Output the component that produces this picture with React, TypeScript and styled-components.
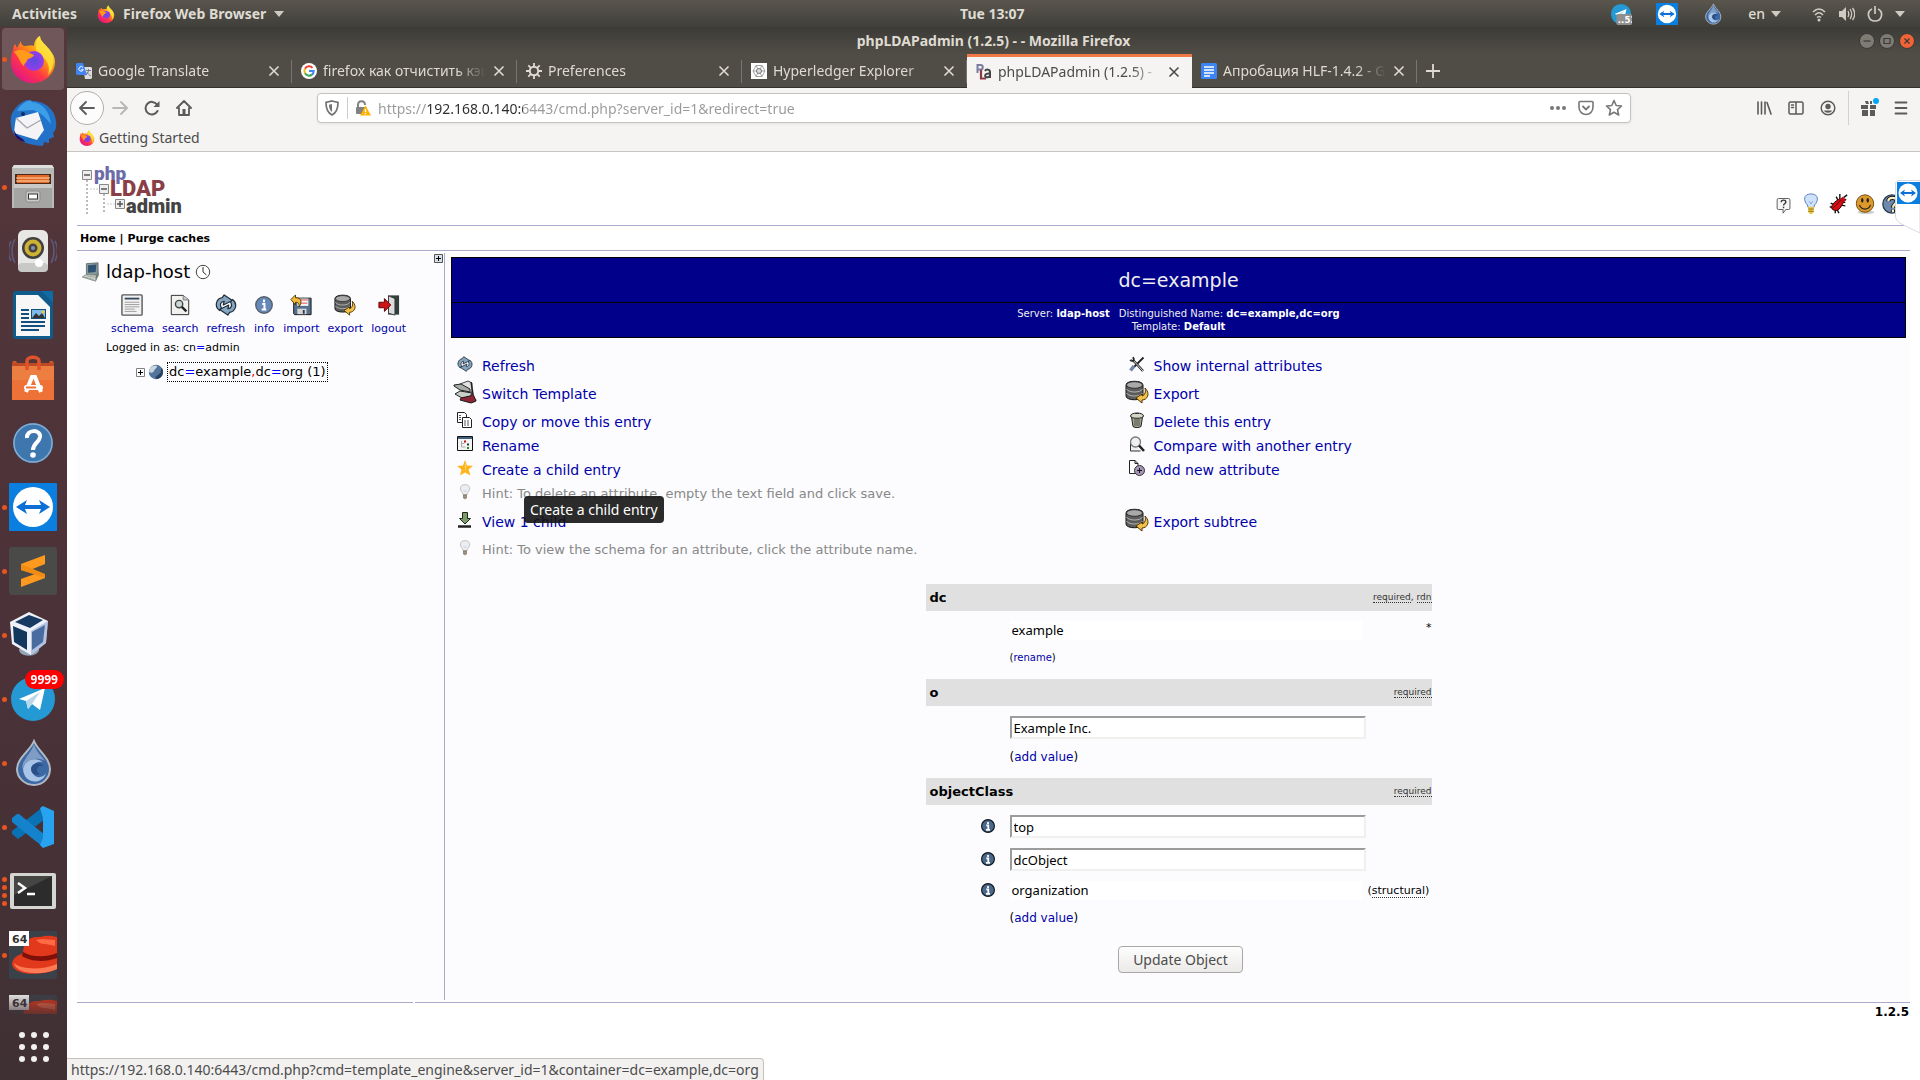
import React from "react";
import styled, { createGlobalStyle, css } from "styled-components";

const UI = `"Noto Sans", "Open Sans", sans-serif`;
const WEB = `"DejaVu Sans", Verdana, sans-serif`;

const Global = createGlobalStyle`
  *, *::before, *::after { box-sizing: border-box; }
  body { margin: 0; font-family: ${UI}; font-size: 14px; background: #fff; }
  button { font: inherit; color: inherit; border: 0; padding: 0; background: none; }
  a { color: #0000aa; text-decoration: none; }
  svg { display: block; flex: none; }
`;

/* ---------- shell ---------- */

const Desktop = styled.div`
  height: 100vh;
  display: flex;
  flex-direction: column;
  overflow: hidden;
`;

const TopBar = styled.header`
  flex: none;
  height: 27px;
  display: grid;
  grid-template-columns: 50% auto 1fr;
  align-items: center;
  background: linear-gradient(#5a564e, #403f3a);
  color: #dfdbd2;
  font-weight: 700;
  line-height: 20px;
`;

const TopGroup = styled.div<{ $end?: boolean }>`
  display: flex;
  align-items: center;
  gap: ${(p) => (p.$end ? "30px" : "20px")};
  padding: 0 ${(p) => (p.$end ? 15 : 12)}px;
  justify-content: ${(p) => (p.$end ? "flex-end" : "flex-start")};
`;

const TopButton = styled.button<{ $gap?: number }>`
  display: flex;
  align-items: center;
  gap: ${(p) => p.$gap ?? 8}px;
  font-weight: ${(p) => (p.$gap ? 500 : 700)};
`;

const TrayIcons = styled.div`
  display: flex;
  align-items: center;
  gap: 24px;
  margin-right: -6px;
`;

const Body = styled.div`
  flex: 1;
  min-height: 0;
  display: flex;
`;

const Dock = styled.nav`
  flex: none;
  width: 67px;
  display: flex;
  flex-direction: column;
  background: linear-gradient(#54373b, #4b3238 60%, #3f3034);
`;

const DockList = styled.div`
  flex: 1;
  min-height: 0;
  display: flex;
  flex-direction: column;
  gap: 2px;
  padding: 1px 3px 0 2px;
  overflow: hidden;
  mask-image: linear-gradient(#000 calc(100% - 24px), rgba(0, 0, 0, 0.25));
`;

const DockItem = styled.button<{ $active?: boolean }>`
  position: relative;
  flex: none;
  height: 62px;
  display: flex;
  align-items: center;
  gap: 2px;
  border-radius: 4px;
  background: ${(p) => (p.$active ? "#705759" : "transparent")};
`;

const Dots = styled.span`
  width: 5px;
  display: flex;
  flex-direction: column;
  gap: 3px;
  i {
    height: 5px;
    border-radius: 50%;
    background: #e95420;
  }
`;

const Badge = styled.span`
  position: absolute;
  top: 2px;
  right: 0;
  padding: 0 6px;
  border-radius: 10px;
  background: #ff0000;
  color: #fff;
  font: 700 12px/19px ${UI};
`;

const AppsButton = styled.button`
  height: 66px;
  display: flex;
  align-items: center;
  justify-content: center;
`;

const Browser = styled.div`
  position: relative;
  flex: 1;
  min-width: 0;
  display: flex;
  flex-direction: column;
  background: #fff;
`;

const TitleBar = styled.div`
  flex: none;
  height: 27px;
  display: grid;
  grid-template-columns: 1fr auto 1fr;
  align-items: center;
  background: linear-gradient(#3c3b37, #504d46);
  color: #dfdbd2;
  font-weight: 700;
`;

const WindowButtons = styled.div`
  grid-column: 3;
  justify-self: end;
  display: flex;
  gap: 4px;
  padding-right: 5px;
`;

const WindowTitle = styled.span`
  grid-column: 2;
`;

const TabStrip = styled.div`
  flex: none;
  height: 34px;
  display: flex;
  background: #504d46;
  border-bottom: 1px solid #33322e;
`;

const TabBox = styled.div<{ $active?: boolean }>`
  position: relative;
  flex: 0 1 225px;
  min-width: 0;
  display: flex;
  align-items: center;
  gap: 6px;
  padding: 1px 11px 0 9px;
  color: #dfdbd2;
  ${(p) =>
    p.$active
      ? css`
          margin-bottom: -1px;
          background: #f5f4f2;
          color: #4c4c4c;
          border-top: 3px solid #f07746;
          padding-bottom: 3px;
        `
      : css`
          &::after {
            content: "";
            align-self: stretch;
            margin: 5px -11px 4px 4px;
            border-right: 1px solid #78756e;
          }
        `}
`;

const TabTitle = styled.span`
  flex: 1;
  min-width: 0;
  overflow: hidden;
  white-space: nowrap;
  line-height: 20px;
  mask-image: linear-gradient(to right, #000 calc(100% - 30px), transparent);
`;

const NewTab = styled.button`
  width: 32px;
  display: flex;
  align-items: center;
  justify-content: center;
`;

const NavBar = styled.div`
  flex: none;
  height: 40px;
  display: flex;
  align-items: center;
  background: #f5f4f2;
  color: #5b5b5b;
`;

const NavButtons = styled.div<{ $end?: boolean }>`
  display: flex;
  align-items: center;
  gap: 12px;
  ${(p) => (p.$end ? "padding-right: 9px;" : "padding-left: 3px;")}
`;

const NavButton = styled.button<{ $round?: boolean }>`
  display: flex;
  align-items: center;
  justify-content: center;
  width: ${(p) => (p.$round ? 34 : 20)}px;
  height: ${(p) => (p.$round ? 34 : 20)}px;
  ${(p) =>
    p.$round &&
    css`
      margin-right: -6px;
      border: 1px solid #b0aeac;
      border-radius: 50%;
      background: #fcfcfc;
    `}
`;

const NavDivider = styled.i`
  width: 1px;
  height: 34px;
  margin: 0 -2px;
  background: #d3d1cf;
`;

const NavSpacer = styled.div`
  flex: 0 1 123px;
`;

const UrlBar = styled.div`
  flex: 1;
  height: 30px;
  display: flex;
  align-items: center;
  gap: 7px;
  padding: 0 6px;
  border: 1px solid #c4c2c0;
  border-radius: 4px;
  background: #fff;
  box-shadow: 0 1px 3px rgba(0, 0, 0, 0.08);
  color: #828282;
`;

const UrlDivider = styled.i`
  width: 1px;
  height: 22px;
  background: #cfcdcb;
`;

const UrlInput = styled.input`
  flex: 1;
  min-width: 0;
  height: 24px;
  border: 0;
  padding: 0;
  outline: 0;
  font: 14px/20px ${UI};
  color: transparent;
  background: linear-gradient(to right, #999 48px, #2c2c2c 48px, #2c2c2c 145px, #999 145px);
  background-clip: text;
  -webkit-background-clip: text;
`;

const UrlActions = styled.div`
  display: flex;
  gap: 10px;
  padding-right: 1px;
`;

const Bookmarks = styled.div`
  flex: none;
  height: 24px;
  padding: 0 12px 3px;
  display: flex;
  background: #f5f4f2;
  border-bottom: 1px solid #c6c4c2;
  a {
    display: flex;
    align-items: center;
    gap: 4px;
    color: #4c4c4c;
    line-height: 20px;
  }
`;

const StatusTip = styled.output`
  position: absolute;
  left: 0;
  bottom: 0;
  height: 22px;
  padding: 0 4px;
  border: 1px solid #c4bfbb;
  border-width: 1px 1px 0 0;
  border-radius: 0 4px 0 0;
  background: #f2f1f0;
  color: #4c4c4c;
  font-size: 14px;
  line-height: 22px;
  white-space: nowrap;
`;

/* ---------- phpLDAPadmin page ---------- */

const Page = styled.div`
  flex: 1;
  min-height: 0;
  padding: 0 10px;
  font: 13px/16px ${WEB};
  color: #000;
`;

const PageHeader = styled.div`
  height: 74px;
  display: flex;
  align-items: flex-end;
  justify-content: space-between;
  padding: 0 7px 10px 5px;
  border-bottom: 1px solid #aaaacc;
`;

const HeaderIcons = styled.div`
  display: flex;
  align-items: center;
  gap: 5px;
`;

const PageNav = styled.nav`
  height: 25px;
  padding: 0 3px;
  border-bottom: 1px solid #aaaacc;
  font: 700 11px/26px ${WEB};
  a { color: #000; }
`;

const Columns = styled.div`
  display: grid;
  grid-template-columns: 368px 1fr;
  margin-top: 2px;
  background: #fcfcfe;
`;

const Tree = styled.aside`
  padding: 1px 1px 0 4px;
  border-right: 1px solid #aaaacc;
`;

const TreeHead = styled.div`
  display: flex;
  align-items: flex-start;
  height: 40px;
`;

const ServerName = styled.h2`
  flex: 1;
  display: flex;
  align-items: center;
  gap: 5px;
  margin: 0;
  font: 400 18px/36px ${WEB};
`;

const ServerTools = styled.div`
  display: flex;
  gap: 8px;
  padding-left: 30px;
  a {
    display: flex;
    flex-direction: column;
    align-items: center;
    gap: 6px;
    font-size: 11px;
    line-height: 14px;
  }
`;

const Eq = styled.b`
  font-weight: 400;
  color: #0000ff;
`;

const Comma = styled.b`
  font-weight: 400;
  color: #ff0000;
`;

const Login = styled.p`
  margin: 0;
  padding: 4px 0 6px 25px;
  font-size: 11px;
`;

const TreeNode = styled.div`
  display: flex;
  align-items: center;
  gap: 3px;
  padding-left: 55px;
  a {
    color: #000;
    padding: 1px;
    border: 1px dotted #000;
  }
`;

const Main = styled.main`
  padding: 4px 4px 27px 6px;
`;

const EntryHead = styled.header`
  border: 1px solid #000;
  background: #00008b;
  color: #eeeeee;
  text-align: center;
  h1 {
    margin: 0;
    border-bottom: 1px solid #000;
    font: 400 19px/44px ${WEB};
  }
  p {
    margin: 0;
    padding: 4px;
    font-size: 10px;
    line-height: 13px;
  }
  b { color: #fff; }
  b + span { margin-left: 9px; }
`;

const Menus = styled.div`
  position: relative;
  display: grid;
  grid-template-columns: 6fr 7fr;
  padding-top: 16px;
`;

const MenuList = styled.ul`
  margin: 0;
  padding: 0;
  list-style: none;
`;

const MenuRow = styled.li<{ $tall?: boolean }>`
  height: ${(p) => (p.$tall ? 32 : 24)}px;
  display: grid;
  grid-template-columns: 28px 1fr;
  column-gap: 3px;
  align-items: center;
  font-size: 14px;
  & > svg {
    justify-self: center;
    margin-bottom: 4px;
  }
`;

const Hint = styled.small`
  color: #888;
  font-size: 13px;
  line-height: 18px;
`;

const Tooltip = styled.div`
  position: absolute;
  left: 73px;
  top: 158px;
  padding: 0 6px;
  border-radius: 4px;
  background: rgba(20, 20, 20, 0.9);
  color: #fff;
  font: 14px/27px ${UI};
`;

const Form = styled.form`
  width: 506px;
  margin: 22px auto 0;
  display: flex;
  flex-direction: column;
`;

const AttrHead = styled.h3`
  height: 28px;
  margin: 0;
  padding: 0 0 0 4px;
  display: flex;
  align-items: center;
  justify-content: space-between;
  background: #e0e0e0;
  background-clip: padding-box;
  border-bottom: 1px solid transparent;
  font: 700 13px/24px ${WEB};
`;

const Notes = styled.span`
  font: 400 9px/12px ${WEB};
  color: #333;
  margin-bottom: 2px;
`;

const Abbr = styled.abbr`
  text-decoration: none;
  border-bottom: 1px dotted #333;
`;

const Values = styled.div`
  display: flex;
  flex-direction: column;
  gap: 10px;
  padding: 9px 0 13px;
`;

const ValueRow = styled.div`
  display: grid;
  grid-template-columns: 84px 356px 1fr;
  align-items: center;
  & > svg {
    justify-self: center;
    margin: 0 0 2px 40px;
  }
`;

const TextBox = styled.input<{ $plain?: boolean }>`
  grid-column: 2;
  width: ${(p) => (p.$plain ? 352 : 356)}px;
  height: ${(p) => (p.$plain ? 19 : 23)}px;
  padding: 0 2px;
  border: ${(p) => (p.$plain ? "0" : "2px solid")};
  border-color: #9c9c9c #f0f0ee #f0f0ee #9c9c9c;
  background: #fff;
  color: #000;
  font: 13px/19px ${UI};
`;

const Side = styled.span<{ $end?: boolean }>`
  font-size: 11px;
  line-height: 14px;
  padding-left: 2px;
  text-align: ${(p) => (p.$end ? "right" : "left")};
  align-self: ${(p) => (p.$end ? "start" : "center")};
`;

const ValueLink = styled.div<{ $small?: boolean }>`
  padding-left: 84px;
  font-size: ${(p) => (p.$small ? 10 : 12)}px;
  line-height: 16px;
`;

const Submit = styled.button`
  align-self: center;
  margin: 7px 0 0 4px;
  height: 27px;
  padding: 0 14px;
  border: 1px solid #aaa8a5;
  border-radius: 4px;
  background: linear-gradient(#fdfdfd, #ebeae8);
  color: #4c4c4c;
  font: 14px/24px ${UI};
`;

const BottomRule = styled.div`
  display: grid;
  grid-template-columns: 336px 1fr;
  gap: 2px;
  margin-top: 2px;
  i {
    height: 1px;
    background: #aaaacc;
  }
`;

const Version = styled.footer`
  padding: 0 1px;
  text-align: right;
  font: 700 12px/18px ${WEB};
`;

const RemotePanel = styled.aside`
  position: absolute;
  right: 0;
  top: 153px;
`;

/* ---------- drawings ---------- */

const Icon = ({ s = 24, vb = "0 0 24 24", children }: { s?: number; vb?: string; children: React.ReactNode }) => (
  <svg width={s} height={s} viewBox={vb} fill="none" aria-hidden="true">
    {children}
  </svg>
);

const Caret = () => (
  <svg width="10" height="6" viewBox="0 0 10 6" aria-hidden="true">
    <path d="M0 0h10L5 6z" fill="#cfcbc2" />
  </svg>
);

const Firefox = ({ s = 48 }: { s?: number }) => (
  <Icon s={s} vb="0 0 48 48">
    <defs>
      <linearGradient id={`ffa${s}`} x1=".85" y1=".1" x2=".2" y2=".95">
        <stop offset="0" stopColor="#fff44f" />
        <stop offset=".35" stopColor="#ff980e" />
        <stop offset=".65" stopColor="#ff3647" />
        <stop offset="1" stopColor="#e31587" />
      </linearGradient>
      <radialGradient id={`ffb${s}`}>
        <stop offset="0" stopColor="#5b4be0" />
        <stop offset="1" stopColor="#9a3be8" />
      </radialGradient>
    </defs>
    <path d="M4 15c0-2 1-5 2-6l2 4 4-7c0 3 1 4 3 5 3 0 8-1 10 0 0-4 2-8 6-10 0 5 5 8 9 13 3 4 6 7 6 13 0 12-10 21-22 21S2 39 2 27c0-5 1-9 2-12z" fill={`url(#ffa${s})`} />
    <path d="M27 11c0-4 1-8 4-10 0 5 5 8 9 13 7 8 5 20-1 26 3-10-2-16-7-19-5-3-5-6-5-10z" fill="#ffe23b" opacity=".85" />
    <circle cx="25" cy="26" r="10" fill={`url(#ffb${s})`} />
    <path d="M5 17c5-3 10-3 13 0 3 1 5 2 7 3-1 3-5 3-7 5 0 3-3 3-3 6-4-2-4-8-10-14z" fill="#ff9a1a" />
  </Icon>
);

const Thunderbird = () => (
  <Icon s={48} vb="0 0 48 48">
    <path d="M2 26C0 12 10 4 18 1l4 1c12-1 25 8 25 21 1 6-1 9-3 11l1 4-5 2v4l-5-1-1 4C20 46 3 42 2 26z" fill="#2372c9" />
    <path d="M8 12C13 2 25-1 22 3c14 1 19 12 20 22-5-5-8-11-18-14z" fill="#3d9ee8" />
    <path d="M7 19l22-6 6 18-7 10-23-7 1-9z" fill="#f4f4f6" />
    <path d="M7 19l11 10 14-8" stroke="#a5a5ae" strokeWidth="1.4" />
    <path d="M5 31c3 8 8 6 11 12C8 41 5 37 5 31z" fill="#22116b" />
    <circle cx="14" cy="15" r="2" fill="#102b5e" />
  </Icon>
);

const Files = () => (
  <Icon s={48} vb="0 0 48 48">
    <path d="M3 5l2-3h38l2 3v40H3z" fill="#b9b9b7" />
    <path d="M3 5l2-3h38l2 3z" fill="#dededc" />
    <path d="M6 11h36v12H6z" fill="#4b2a19" />
    <path d="M8 12h32v8H8z" fill="#e2692a" />
    <path d="M7 15h34M7 18h34" stroke="#ffd9a8" />
    <path d="M5 21h38v24H5z" fill="#a5a5a3" />
    <path d="M5 21h38v4H5z" fill="#c9c9c7" />
    <rect x="17" y="28" width="14" height="11" rx="2" fill="#c9c9c7" stroke="#8c8c8a" />
    <rect x="19.500" y="31" width="9" height="5" fill="#fff" stroke="#333" />
  </Icon>
);

const Rhythmbox = () => (
  <Icon s={48} vb="0 0 48 48">
    <path d="M6 12c-4 7-4 17 0 24M42 12c4 7 4 17 0 24M2 14c-3 6-3 14 0 20M46 14c3 6 3 14 0 20" stroke="#5d5a7d" strokeWidth="1.500" />
    <rect x="9" y="3" width="30" height="42" rx="6" fill="#e7e7e5" />
    <rect x="9" y="36" width="30" height="9" rx="4" fill="#c8c8c6" />
    <circle cx="24" cy="21" r="11" fill="#3f3f3f" />
    <circle cx="24" cy="21" r="8.500" fill="#cfb233" />
    <circle cx="24" cy="21" r="4.500" fill="#444" />
    <circle cx="24" cy="21" r="2" fill="#8292ad" />
    <circle cx="30" cy="36" r="4" fill="#fff" />
  </Icon>
);

const Writer = () => (
  <Icon s={48} vb="0 0 48 48">
    <path d="M7 0h25l12 12v33c0 2-1 3-3 3H7c-2 0-3-1-3-3V3c0-2 1-3 3-3z" fill="#0f5b8b" />
    <path d="M32 0h12v12z" fill="#0d6ba6" />
    <path d="M7 4h22l12 12v29H7z" fill="#f7f7f7" />
    <path d="M12 19h8M12 23h8M12 27h8M12 31h24M12 35h24M12 39h18" stroke="#14507d" strokeWidth="1.8" />
    <rect x="22.500" y="18.500" width="14" height="9" fill="#7ebbe8" stroke="#14507d" />
    <path d="M23 27l4-5 3 3 3-3 3 5z" fill="#333" />
    <circle cx="34" cy="21" r="1.500" fill="#ffc33b" />
  </Icon>
);

const Store = () => (
  <Icon s={48} vb="0 0 48 48">
    <path d="M4 6h3l2 4H3zM44 6h-3l-2 4h6z" fill="#d0562c" />
    <path d="M3 8h42v9H3z" fill="#bd4a22" />
    <path d="M3 11h42v34H3z" fill="#ee7137" />
    <path d="M3 11h42v14H3z" fill="#e98b4c" opacity=".5" />
    <path d="M18 15V6c0-5 12-5 12 0v9" stroke="#e0522b" strokeWidth="3.500" />
    <path d="M17 37l6-15h3l6 15" stroke="#fff" strokeWidth="4" />
    <rect x="15" y="30" width="19" height="5" rx="2.500" fill="#fff" />
    <path d="M17 32.500h10" stroke="#ee7137" strokeWidth="2" />
  </Icon>
);

const HelpApp = () => (
  <Icon s={48} vb="0 0 48 48">
    <circle cx="24" cy="24" r="20" fill="#3d77ae" />
    <circle cx="24" cy="24" r="19" stroke="#86abd0" strokeWidth="1.500" />
    <path d="M18 19c-1-9 14-9 13-1-1 6-7 6-7 13" stroke="#fff" strokeWidth="4" />
    <circle cx="24" cy="36" r="2.800" fill="#fff" />
  </Icon>
);

const TeamViewer = ({ s = 48 }: { s?: number }) => (
  <Icon s={s} vb="0 0 48 48">
    <rect width="48" height="48" fill="#0b7fe0" rx="1" />
    <circle cx="24" cy="24" r="20" fill="#fff" />
    <path d="M7 24l11-7-2 5h16l-2-5 11 7-11 7 2-5H16l2 5z" fill="#0b6fd6" />
  </Icon>
);

const Sublime = () => (
  <Icon s={48} vb="0 0 48 48">
    <rect width="48" height="48" rx="3" fill="#4a4a48" />
    <path d="M12 17L36 8v9l-15 6 15 5v3L12 40v-8l14-5-14-4z" fill="#ff9a1f" />
    <path d="M12 17l24 10v4L12 23z" fill="#f08c14" />
  </Icon>
);

const VBox = () => (
  <Icon s={48} vb="0 0 48 48">
    <path d="M10 38c0 10 22 8 20-1l-8-3z" fill="#93a5b8" />
    <path d="M20 1L1 11l2 22 19 11 15-12 2-22z" fill="#eef2f8" />
    <path d="M20 4L6 11l15 6 13-8z" fill="#173a63" />
    <path d="M4 15l14 6v18L5 31z" fill="#14375d" />
    <path d="M23 21l13-7-2 17-11 8z" fill="#1b4370" />
    <path d="M39 10l-2 22-15 12V20z" fill="#7894ce" opacity=".5" />
  </Icon>
);

const Telegram = ({ s = 48, count }: { s?: number; count?: boolean }) => (
  <Icon s={s} vb="0 0 48 48">
    <circle cx="24" cy="24" r="22" fill="#2499d3" />
    <path d="M10 24l26-11-5 22-8-6-4 5-2-8z" fill="#fff" />
    <path d="M17 26l14-9-8 12-4 5z" fill="#b8d8ea" />
    {count && (
      <>
        <rect x="14" y="24" width="34" height="24" rx="4" fill="#8f8f8f" />
        <text x="17" y="43" fontSize="19" fontFamily="DejaVu Sans" fill="#fff">..52</text>
      </>
    )}
  </Icon>
);

const Drop = ({ s = 48 }: { s?: number }) => (
  <Icon s={s} vb="0 0 48 48">
    <path d="M25 2c4 10 16 17 16 28 0 9-7 16-16 16S8 39 8 30C8 19 21 12 25 2z" fill="#3c69a3" stroke="#b3b9c3" strokeWidth="2" />
    <path d="M25 5c2 8 8 12 11 17-8-5-20-1-22 8-3-7 8-15 11-25z" fill="#7f9cc4" />
    <path d="M14 30c2-9 12-13 20-7-9-2-14 7-9 13 4 4 10 2 12-2-3 12-22 12-23-4z" fill="#a9c4e6" />
    <path d="M22 30c0-6 8-8 13-3-8-2-9 6-4 8-4 2-9 0-9-5z" fill="#2a4f87" />
  </Icon>
);

const VSCode = () => (
  <Icon s={48} vb="0 0 48 48">
    <path d="M34 4l1 13L9 36l-6-5v-3z" fill="#0b71b5" />
    <path d="M3 19v-4l5-4h2l26 21-2 12z" fill="#1583cc" />
    <path d="M34 3l11 5v33l-11 4-3-3 3-7V15l-3-10z" fill="#28a3f0" />
  </Icon>
);

const Terminal = () => (
  <Icon s={48} vb="0 0 48 48">
    <rect x="1" y="6" width="46" height="36" rx="2" fill="#d5d5d1" />
    <rect x="5" y="9" width="38" height="30" fill="#2b2c2b" />
    <path d="M5 9h38L5 28z" fill="#454644" />
    <path d="M9 16l7 5-7 5M18 27h8" stroke="#fff" strokeWidth="2.500" />
  </Icon>
);

const RedHat = () => (
  <Icon s={48} vb="0 0 48 48">
    <rect width="48" height="48" rx="2" fill="#3b4149" />
    <path d="M3 33c1-8 8-9 11-11 0-8 5-17 14-16 6 0 8-3 20 0v32C30 46 4 44 3 33z" fill="#e2381c" />
    <path d="M5 32c6 6 26 8 43 1v5C30 46 6 42 5 32z" fill="#ff7a55" />
    <path d="M14 21c8 5 22 6 34 1v5c-13 5-28 3-35-2z" fill="#7d1008" />
    <path d="M27 9c7-2 14 0 19 0v6c-8-3-14 0-19-6z" fill="#ff6a45" />
    <rect width="20" height="15" fill="#fff" />
    <text x="3" y="12" fontSize="11" fontWeight="700" fontFamily="DejaVu Sans" fill="#333">64</text>
  </Icon>
);

const AppsGrid = () => (
  <Icon s={32} vb="0 0 32 32">
    {[4, 16, 28].map((y) => [4, 16, 28].map((x) => <circle key={`${x}-${y}`} cx={x} cy={y} r="3" fill="#f2f1f0" />))}
  </Icon>
);

const Wifi = () => (
  <Icon s={16} vb="0 0 16 16">
    <path d="M2 6c4-4 8-4 12 0M4 9c3-3 5-3 8 0M6 11.500c1-1 3-1 4 0" stroke="#cfcbc2" strokeWidth="1.600" />
    <circle cx="8" cy="14" r="1.500" fill="#cfcbc2" />
  </Icon>
);
const Volume = () => (
  <Icon s={16} vb="0 0 16 16">
    <path d="M0 5h3l4-4v14l-4-4H0z" fill="#cfcbc2" />
    <path d="M9 5c1 2 1 4 0 6M11 3c2 3 2 7 0 10M13.500 2c3 4 3 8 0 12" stroke="#cfcbc2" strokeWidth="1.300" />
  </Icon>
);
const Power = () => (
  <Icon s={16} vb="0 0 16 16">
    <path d="M5 3C-1 6 1 15 8 15s9-9 3-12M8 0v8" stroke="#cfcbc2" strokeWidth="1.700" />
  </Icon>
);

const WinButton = ({ kind }: { kind: "min" | "max" | "close" }) => (
  <Icon s={16} vb="0 0 16 16">
    <circle cx="8" cy="8" r="7.500" fill={kind === "close" ? "#ef6337" : "#7d7b74"} stroke="#3a3935" />
    <path d={kind === "min" ? "M4.500 8h7" : kind === "max" ? "M5 5.500h6v5H5z" : "M5.500 5.500l5 5M10.500 5.500l-5 5"} stroke="#3a3935" strokeWidth="1.200" />
  </Icon>
);

const Cross = () => (
  <Icon s={14} vb="0 0 14 14">
    <path d="M2.500 2.500l9 9M11.500 2.500l-9 9" stroke="currentColor" strokeWidth="1.600" />
  </Icon>
);

const FavTranslate = () => (
  <Icon s={16} vb="0 0 16 16">
    <path d="M7 4h8l1 1v10l-1 1H9z" fill="#dcdcdc" />
    <path d="M0 1l1-1h6l4 12H1l-1-1z" fill="#4384f3" />
    <path d="M7 4.500a2.300 2.300 0 1 0 .3 2.200H5.200" stroke="#fff" />
    <path d="M10 7.500h5M12.500 6v1.500c0 2-2 4-3 4.500M11 9c1 2 2 3 4 4" stroke="#667" strokeWidth=".8" />
  </Icon>
);
const FavGoogle = () => (
  <Icon s={16} vb="0 0 16 16">
    <circle cx="8" cy="8" r="8" fill="#fff" />
    <path d="M11.500 4.800A4.600 4.600 0 0 0 4 5.700" stroke="#ea4335" strokeWidth="2" />
    <path d="M4 5.700a4.700 4.700 0 0 0 0 4.600" stroke="#fbbc05" strokeWidth="2" />
    <path d="M4 10.300a4.700 4.700 0 0 0 7 1.300" stroke="#34a853" strokeWidth="2" />
    <path d="M8 8h4.700c0 1.500-.6 2.800-1.700 3.600" stroke="#4285f4" strokeWidth="2" />
  </Icon>
);
const FavGear = () => (
  <Icon s={16} vb="0 0 16 16">
    <circle cx="8" cy="8" r="4.200" stroke="#dfdbd2" strokeWidth="2" />
    <path d="M8 0v4M8 12v4M0 8h4M12 8h4M2.300 2.300l2.800 2.800M10.900 10.900l2.800 2.800M2.300 13.700l2.800-2.800M10.900 5.100l2.800-2.800" stroke="#dfdbd2" strokeWidth="1.800" />
  </Icon>
);
const FavHyper = () => (
  <Icon s={16} vb="0 0 16 16">
    <rect width="16" height="16" fill="#fff" />
    <path d="M5 2.500h6l3 5.500-3 5.500H5L2 8zM5 2.500L8 8l3-5.500M2 8h12M5 13.500L8 8l3 5.500" stroke="#8d8d8d" strokeWidth=".8" />
    <circle cx="8" cy="8" r="2.500" stroke="#777" fill="#ddd" />
  </Icon>
);
const FavPla = () => (
  <Icon s={16} vb="0 0 16 16">
    <path d="M1.500 9V1h3c3 0 3 4.500 0 4.500h-3" stroke="#7c7ca0" strokeWidth="2" />
    <path d="M5 6v8.500h5" stroke="#8c3a42" strokeWidth="2.200" />
    <path d="M9 7c1-2 5-2 5 1v6M14 9.500c-6-.5-6 4-2.500 3.800 1.500 0 2.500-1 2.500-2" stroke="#444" strokeWidth="2" />
  </Icon>
);
const FavDocs = () => (
  <Icon s={16} vb="0 0 16 16">
    <rect width="16" height="16" rx="1.500" fill="#3c83f3" />
    <path d="M3 4h10M3 7h10M3 10h10M3 13h6" stroke="#fff" strokeWidth="1.500" />
  </Icon>
);

const line = (d: string, w = 2) => <path d={d} stroke="currentColor" strokeWidth={w} strokeLinecap="round" strokeLinejoin="round" />;

const BackIcon = () => <Icon s={16} vb="0 0 16 16">{line("M15 8H1.500M7 2L1 8l6 6", 1.8)}</Icon>;
const ForwardIcon = () => <Icon s={16} vb="0 0 16 16"><path d="M1 8h13.500M9 2l6 6-6 6" stroke="#b9b7b5" strokeWidth="1.800" strokeLinecap="round" strokeLinejoin="round" /></Icon>;
const ReloadIcon = () => <Icon s={16} vb="0 0 16 16">{line("M13.500 11A6.300 6.300 0 1 1 13 4.500")}<path d="M15.500 1v6h-6z" fill="currentColor" /></Icon>;
const HomeIcon = () => <Icon s={16} vb="0 0 16 16">{line("M1 8l7-7 7 7M3 8v7h10V8", 1.8)}<path d="M6.500 9h3v5h-3z" fill="currentColor" /></Icon>;
const Shield = () => <Icon s={16} vb="0 0 16 16"><path d="M8 1l6 1.500c0 6-1 10-6 12.500C3 12.500 2 8.500 2 2.500z" stroke="#737373" strokeWidth="1.700" /><path d="M8 4v8C5.500 10 5 8 5 4.800z" fill="#737373" /></Icon>;
const LockWarn = () => (
  <Icon s={16} vb="0 0 16 16">
    <path d="M3 8V5c0-5 7-5 7 0" stroke="#828282" strokeWidth="2" />
    <rect x="1" y="7" width="11" height="7" rx="1" fill="#828282" />
    <path d="M10.500 5.500L16 15.500H5z" fill="#ffb300" />
    <path d="M10.500 9v3M10.500 13v1.300" stroke="#fff" strokeWidth="1.300" />
  </Icon>
);
const MoreDots = () => <Icon s={18} vb="0 0 18 18"><circle cx="3" cy="9" r="2" fill="#777" /><circle cx="9" cy="9" r="2" fill="#777" /><circle cx="15" cy="9" r="2" fill="#777" /></Icon>;
const Pocket = () => <Icon s={18} vb="0 0 18 18"><path d="M3 2.500h12c.8 0 1 .4 1 1V8c0 10-14 10-14 0V3.500c0-.6.2-1 1-1z" stroke="#777" strokeWidth="1.600" /><path d="M5.500 7L9 10.500 12.500 7" stroke="#777" strokeWidth="1.800" /></Icon>;
const Star = () => <Icon s={18} vb="0 0 18 18"><path d="M9 1.500l2.200 5 5.300.5-4 3.600 1.200 5.400L9 13.200 4.300 16l1.200-5.400-4-3.600 5.300-.5z" stroke="#777" strokeWidth="1.600" strokeLinejoin="round" /></Icon>;
const Library = () => <Icon s={16} vb="0 0 16 16">{line("M2 2v12M5.500 2v12M9 2v12M11 2.500L15 14", 1.6)}</Icon>;
const Sidebar = () => <Icon s={16} vb="0 0 16 16">{line("M2 2h12l1 1v10l-1 1H2l-1-1V3zM8 2v12M3.500 5H5.500M3.500 7.500h2", 1.5)}</Icon>;
const Account = () => (
  <Icon s={16} vb="0 0 16 16">
    <circle cx="8" cy="8" r="6.800" stroke="currentColor" strokeWidth="1.500" />
    <circle cx="8" cy="6.500" r="2.700" fill="currentColor" />
    <path d="M4 10.500h8c-1 3-7 3-8 0z" fill="currentColor" />
  </Icon>
);
const Gift = () => (
  <Icon s={20} vb="0 0 20 20">
    <path d="M2 7h7v4H2zM11 7h6v4h-6zM3 12h6v6H3zM11 12h5v6h-5zM6 3h3l1 3H7z M11 3h2v3h-2z" fill="currentColor" />
    <circle cx="17" cy="3" r="3" fill="#00a7f5" />
  </Icon>
);
const Burger = () => <Icon s={16} vb="0 0 16 16">{line("M2.500 2.500h11M2.500 8h11M2.500 13.500h11", 1.8)}</Icon>;

const Logo = () => (
  <svg width="104" height="50" viewBox="0 0 104 50" role="img" aria-label="phpLDAPadmin">
    <path d="M5 15v34M22 29v20" stroke="#bbb" strokeWidth="2" strokeDasharray="2 2" />
    <path d="M8 24h9M25 39h8" stroke="#ccc" strokeDasharray="2 1" />
    <g fill="#eee" stroke="#888">
      <path d="M.5 5.500h9v9h-9zM17.500 19.500h9v9h-9zM33.500 34.500h9v9h-9z" />
      <path d="M2 10h6M19 24h6M35 39h6M38 36v6" stroke="#555" strokeWidth="1.500" />
    </g>
    <g fontWeight="900" fontFamily="Roboto, Liberation Sans">
      <text x="12" y="15" fontSize="19" fill="#6c6ca8">php</text>
      <text x="28" y="31" fontSize="22" fill="#8a3f48">LDAP</text>
      <text x="44" y="48" fontSize="20" fill="#434343">admin</text>
    </g>
  </svg>
);

const HelpBubble = () => (
  <Icon s={22}>
    <path d="M4.500 7.500c0-1 .5-1.500 1.500-1.500h11c1 0 1.500.5 1.500 1.500v9c0 1-.5 1.500-1.500 1.500h-3l-3 4v-4H6c-1 0-1.500-.5-1.500-1.500z" fill="#f6f6f6" stroke="#555" />
    <path d="M9 10c0-3 5-3 5 0 0 1.500-2.500 1.500-2.500 3.500M11.500 15v1.500" stroke="#333" strokeWidth="1.500" />
  </Icon>
);
const Bulb = ({ s = 22, grey }: { s?: number; grey?: boolean }) => (
  <Icon s={s}>
    <path d="M12 1C3 1 4 9 8 13l1 3h6l1-3c4-4 5-12-4-12z" fill={grey ? "#ececf3" : "#cfe2fb"} stroke={grey ? "#a9a9b0" : "#4d78b8"} />
    <path d="M10 9l2 3 2-3" stroke={grey ? "#ccc" : "#7f9cca"} />
    <path d="M9 15h6v6l-2 2h-2l-2-2z" fill={grey ? "#aaa089" : "#eec645"} />
    <path d="M9 17.500h6M9 20h6" stroke={grey ? "#77715f" : "#8a6d13"} />
  </Icon>
);
const Bug = () => (
  <Icon s={22}>
    <path d="M4 11l4 2M3 15l4 1M9 22v-4M13 22l-2-4M10 4l2 4M14 1v6M20 10l-5 1M20 14l-6-1M18 5l4-3M21 7h-4" stroke="#111" strokeWidth="1.500" />
    <path d="M6 13c2-4 6-5 8-7l4 4c-2 3-3 8-8 9-5 0-6-3-4-6z" fill="#d80f14" stroke="#300" />
    <path d="M13 8l4-4 4 4-4 3z" fill="#c00c10" />
    <path d="M6 17l9-9" stroke="#400" />
  </Icon>
);
const Smile = () => (
  <Icon s={22}>
    <ellipse cx="13" cy="21" rx="9" ry="2" fill="#ccc" />
    <circle cx="12" cy="11.500" r="9.500" fill="#dd9a2a" stroke="#6d4608" />
    <ellipse cx="9" cy="8" rx="1.300" ry="2.500" fill="#222" />
    <ellipse cx="15" cy="8" rx="1.300" ry="2.500" fill="#222" />
    <path d="M6 13c2 6 10 6 12 0" stroke="#222" strokeWidth="1.300" />
  </Icon>
);
const HelpRound = () => (
  <Icon s={22}>
    <circle cx="12" cy="12" r="10" fill="#6d8aae" stroke="#2c3e55" strokeWidth="1.500" />
    <path d="M8 9c0-5 9-5 9 0 0 3-4 3-4 7M13 18v3" stroke="#111" strokeWidth="4.500" />
    <path d="M8 9c0-5 9-5 9 0 0 3-4 3-4 7M13 18v3" stroke="#f6ecc0" strokeWidth="2.500" />
  </Icon>
);

const Computer = () => (
  <Icon s={20} vb="1 0 21 24">
    <path d="M6 2l14-1-1 14-13 1z" fill="#8a9a9a" stroke="#59666a" />
    <path d="M8 4l10-1-1 9-9 1z" fill="#2f5272" />
    <path d="M1 18l5-3 13 1-2 7z" fill="#d5dbd3" stroke="#7b857f" />
    <path d="M3 18l12 3M6 16.500l11 2" stroke="#8d978f" />
    <path d="M20 1l1 15-4 7v-6l2-2z" fill="#6e7b7b" />
  </Icon>
);
const Clock = () => (
  <Icon s={16} vb="0 0 16 16">
    <circle cx="8" cy="8" r="6.700" fill="#fff" stroke="#444" />
    <path d="M8 3v5l3.500 3" stroke="#333" />
  </Icon>
);
const Schema = () => (
  <Icon s={22}>
    <rect x="1" y="1" width="22" height="22" rx="1" fill="#f2f2f2" stroke="#555" strokeWidth="1.500" />
    <path d="M4 5h16" stroke="#34495e" strokeWidth="2" />
    <path d="M4 9h16M4 11.500h16M4 14h16M4 16.500h11M4 19h13" stroke="#999" />
  </Icon>
);
const Search = () => (
  <Icon s={22}>
    <path d="M2.500 1.500h13l6 5v16h-19z" fill="#f1f1ee" stroke="#222" />
    <path d="M15.500 1.500v5h6" stroke="#777" fill="#ccc" />
    <circle cx="11" cy="11" r="4" fill="#cfd6d6" stroke="#444" strokeWidth="1.500" />
    <path d="M14 14l5 5" stroke="#222" strokeWidth="2.500" />
  </Icon>
);
const Refresh = ({ s = 22 }: { s?: number }) => (
  <Icon s={s}>
    <path d="M5 18C-1 14 1 5 8 4l2-3 9 6-10 5 1-4c-4 0-5 4-3 7z" fill="#86a5be" stroke="#1f2d3a" strokeWidth="1.300" strokeLinejoin="round" />
    <path d="M19 6c6 4 4 13-3 14l-2 3-9-6 10-5-1 4c4 0 5-4 3-7z" fill="#86a5be" stroke="#1f2d3a" strokeWidth="1.300" strokeLinejoin="round" />
  </Icon>
);
const Info = ({ s = 22, dark }: { s?: number; dark?: boolean }) => (
  <Icon s={s}>
    <circle cx="12" cy="12" r={dark ? 11 : 9} fill={dark ? "#4b6889" : "#6588b8"} stroke={dark ? "#101a26" : "#56606c"} strokeWidth={dark ? 2 : 1.5} />
    <path d={dark ? "M12 5v3.500M9 11h3.500v8M8.500 18.500h7" : "M12 6v3M10 11h2.500v6M9.500 17h5"} stroke="#fff" strokeWidth={dark ? 3 : 2.2} />
  </Icon>
);
const Import = () => (
  <Icon s={22}>
    <path d="M4 4.500h19v18H5l-1-1z" fill="#53708f" stroke="#111" />
    <path d="M8 5h12v8H8z" fill="#f4f4f4" />
    <path d="M8 6.500h12M10 10h9" stroke="#d44" />
    <path d="M8 16h10v6H8z" fill="#d6d6d6" />
    <path d="M14 17.500h2v4h-2z" fill="#334" />
    <path d="M1 6l5-5v3c7 0 7 5 4 10 0-4-1-5-4-5v3z" fill="#f0b93a" stroke="#4d3300" />
  </Icon>
);
const Export = ({ s = 24 }: { s?: number }) => (
  <Icon s={s}>
    <path d="M1 5c0-5 17-5 17 0v11c0 5-17 5-17 0z" fill="#5c5c5c" stroke="#151515" />
    <ellipse cx="9.500" cy="5" rx="8" ry="3.300" fill="#a9a9a9" stroke="#333" />
    <path d="M1.500 9c2 4 14 4 16 0M1.500 13c2 4 14 4 16 0" stroke="#b5b5b5" />
    <path d="M20 8c6 6 2 12-3 12v3l-6-5 6-4v2c3-1 4-4 3-8z" fill="#f3c14a" stroke="#4d3300" strokeLinejoin="round" />
  </Icon>
);
const Logout = () => (
  <Icon s={22}>
    <path d="M11 1.500h12v21H11z" fill="#333f3a" />
    <path d="M11.500 2l7 3v18l-7-2z" fill="#dcdcdc" stroke="#333" />
    <path d="M1 9h6V5l7 7-7 7v-4H1z" fill="#cf1418" stroke="#500" />
  </Icon>
);
const PlusBox = ({ blue }: { blue?: boolean }) => (
  <Icon s={9} vb="0 0 9 9">
    <path d="M.5.5h8v8h-8z" fill={blue ? "#d5e2ec" : "#fff"} stroke={blue ? "#555" : "#808080"} />
    <path d="M2 4.500h5M4.500 2v5" stroke="#000" />
  </Icon>
);
const Globe = () => (
  <Icon s={16} vb="0 0 16 16">
    <circle cx="8" cy="8" r="7.200" fill="#53759c" />
    <path d="M2 4c3-3 6-3 7-2 0 3-2 2-3 5-1 2-3 2-5 1z" fill="#c9d6df" />
    <path d="M8 15c7 0 8-7 6-11-2 2 0 5-3 6-2 2-4 2-3 5z" fill="#27405f" />
  </Icon>
);
const Knife = () => (
  <Icon>
    <ellipse cx="18" cy="20" rx="6" ry="3" fill="#ccc" />
    <path d="M7 4l8-3 4 2v9l-8 2z" fill="#e2e2e0" stroke="#444" />
    <path d="M1 5l7-1 9 5v3L7 10 1 6z" fill="#a8ada8" stroke="#222" />
    <path d="M2 14l5-3 12 2-2 4-8 1z" fill="#c9cec9" stroke="#222" />
    <path d="M8 18l9-2 3-2 3 7-5 2-11-3z" fill="#8b2535" stroke="#1c1c1c" />
    <path d="M18 2l2 12" stroke="#222" strokeWidth="1.500" />
  </Icon>
);
const Copy = () => (
  <Icon s={16} vb="0 0 16 16">
    <path d="M.5.500h7l2 2v8h-9z" fill="#fff" stroke="#222" />
    <path d="M5.500 5.500h7l2 2v8h-9z" fill="#fff" stroke="#222" />
    <path d="M2 3.500h3M2 5.500h2M2 7.500h2M7 9h5M7 11h6M7 13h5" stroke="#555" strokeDasharray="2 1" />
  </Icon>
);
const Rename = () => (
  <Icon s={16} vb="0 0 16 16">
    <path d="M.500.500h15v14H.500z" fill="#f4f4f4" stroke="#111" />
    <path d="M1 2h14" stroke="#40607c" strokeWidth="2" />
    <path d="M4.500 5v6h4M4.500 7.500h3" stroke="#aaa" />
    <path d="M7 4.500h2v2H7z" fill="#b11" />
    <path d="M10 7.500h2v2h-2z" fill="#333" />
    <path d="M10 11h2v2h-2z" fill="#1a8a1a" />
  </Icon>
);
const GoldStar = () => (
  <Icon s={16} vb="0 0 16 16">
    <path d="M8 0l2 5.500 6 .2-4.500 3.800 2 6L8 12.500l-5 3 1.500-6L0 6l6-.5z" fill="#ffb31a" />
    <path d="M8 2l1.500 4.500L8 12z" fill="#ffd36b" />
  </Icon>
);
const DownArrow = () => (
  <Icon s={16} vb="0 0 16 16">
    <path d="M5.500.5h5v6h3L8 12 2.500 6.500h3z" fill="#7c9b6c" stroke="#1d2a17" />
    <path d="M1 14.500h13" stroke="#222" strokeWidth="2.500" />
  </Icon>
);
const Tools = () => (
  <Icon s={16} vb="0 0 16 16">
    <path d="M14.500 1.500L5 11" stroke="#222" strokeWidth="1.800" />
    <path d="M5 10L1.500 14.500" stroke="#6e86a5" strokeWidth="3.500" />
    <path d="M3 3l11 12" stroke="#222" strokeWidth="2.500" />
    <path d="M3 3l11 12" stroke="#ddd" strokeWidth="1" />
    <path d="M1 4c2 2 4 1 4-1L4 1" stroke="#222" strokeWidth="1.500" />
  </Icon>
);
const Trash = () => (
  <Icon s={16} vb="0 0 16 16">
    <path d="M2.500 5h11L12 14.500c-2 1.500-6 1.500-8 0z" fill="#a5a594" stroke="#222" />
    <path d="M6 7v7M8 7v7M10 7v7" stroke="#555547" />
    <path d="M1.500 4c0-4 13-4 13 0 0 3-13 3-13 0z" fill="#d6d6c6" stroke="#222" />
    <path d="M6 1.500h4" stroke="#333" />
  </Icon>
);
const Compare = () => (
  <Icon s={16} vb="0 0 16 16">
    <path d="M1.500 5v10h10" stroke="#333" fill="#eee" />
    <circle cx="6.500" cy="6" r="5" fill="#eef1f1" stroke="#777" strokeWidth="1.300" />
    <path d="M10 9.500l5 5.500" stroke="#222" strokeWidth="2.600" />
  </Icon>
);
const AddAttr = () => (
  <Icon s={16} vb="0 0 16 16">
    <path d="M.500.500H6l3 3v10H.500z" fill="#fff" stroke="#222" />
    <path d="M6 .5v3h3" stroke="#222" />
    <circle cx="10.500" cy="10.500" r="5" fill="#a394b8" stroke="#333" />
    <path d="M8 10.500h5M10.500 8v5" stroke="#111" />
  </Icon>
);

/* ---------- data ---------- */

type DockEntry = { name: string; icon: React.ReactNode; dots?: number; active?: boolean; badge?: string };
const dock: DockEntry[] = [
  { name: "Firefox", icon: <Firefox />, dots: 1, active: true },
  { name: "Thunderbird", icon: <Thunderbird /> },
  { name: "Files", icon: <Files />, dots: 1 },
  { name: "Rhythmbox", icon: <Rhythmbox /> },
  { name: "Writer", icon: <Writer /> },
  { name: "Ubuntu Software", icon: <Store /> },
  { name: "Help", icon: <HelpApp /> },
  { name: "TeamViewer", icon: <TeamViewer />, dots: 1 },
  { name: "Sublime Text", icon: <Sublime />, dots: 1 },
  { name: "VirtualBox", icon: <VBox />, dots: 1 },
  { name: "Telegram", icon: <Telegram />, dots: 1, badge: "9999" },
  { name: "Deluge", icon: <Drop />, dots: 1 },
  { name: "Code", icon: <VSCode />, dots: 1 },
  { name: "Terminal", icon: <Terminal />, dots: 4 },
  { name: "Virtual machine", icon: <RedHat />, dots: 1 },
  { name: "Virtual machine 2", icon: <RedHat /> },
];

const tabs = [
  { title: "Google Translate", icon: <FavTranslate /> },
  { title: "firefox как отчистить кэш", icon: <FavGoogle /> },
  { title: "Preferences", icon: <FavGear /> },
  { title: "Hyperledger Explorer", icon: <FavHyper /> },
  { title: "phpLDAPadmin (1.2.5) -", icon: <FavPla />, active: true },
  { title: "Апробация HLF-1.4.2 - G", icon: <FavDocs /> },
];

const tools = [
  { label: "schema", icon: <Schema /> },
  { label: "search", icon: <Search /> },
  { label: "refresh", icon: <Refresh /> },
  { label: "info", icon: <Info /> },
  { label: "import", icon: <Import /> },
  { label: "export", icon: <Export s={22} /> },
  { label: "logout", icon: <Logout /> },
];

type Item = { text?: string; icon?: React.ReactNode; tall?: boolean; hint?: boolean };
const leftMenu: Item[] = [
  { text: "Refresh", icon: <Refresh s={16} /> },
  { text: "Switch Template", icon: <Knife />, tall: true },
  { text: "Copy or move this entry", icon: <Copy /> },
  { text: "Rename", icon: <Rename /> },
  { text: "Create a child entry", icon: <GoldStar /> },
  { text: "Hint: To delete an attribute, empty the text field and click save.", icon: <Bulb s={16} grey />, hint: true },
  { text: "View 1 child", icon: <DownArrow />, tall: true },
  { text: "Hint: To view the schema for an attribute, click the attribute name.", icon: <Bulb s={16} grey />, hint: true },
];
const rightMenu: Item[] = [
  { text: "Show internal attributes", icon: <Tools /> },
  { text: "Export", icon: <Export />, tall: true },
  { text: "Delete this entry", icon: <Trash /> },
  { text: "Compare with another entry", icon: <Compare /> },
  { text: "Add new attribute", icon: <AddAttr /> },
  {},
  { text: "Export subtree", icon: <Export />, tall: true },
];

const Menu = ({ items }: { items: Item[] }) => (
  <MenuList>
    {items.map((item, i) => (
      <MenuRow key={i} $tall={item.tall}>
        {item.icon}
        {item.hint ? <Hint>{item.text}</Hint> : item.text && <span><a href="#entry">{item.text}</a></span>}
      </MenuRow>
    ))}
  </MenuList>
);

const Required = () => <Abbr title="Required attribute">required</Abbr>;

export default function App() {
  return (
    <Desktop>
      <Global />
      <TopBar>
        <TopGroup>
          <TopButton>Activities</TopButton>
          <TopButton><Firefox s={18} />Firefox Web Browser<Caret /></TopButton>
        </TopGroup>
        <time>Tue 13:07</time>
        <TopGroup $end>
          <TrayIcons><Telegram s={22} count /><TeamViewer s={22} /><Drop s={22} /></TrayIcons>
          <TopButton $gap={6}>en<Caret /></TopButton>
          <TopButton $gap={12} aria-label="System menu"><Wifi /><Volume /><Power /><Caret /></TopButton>
        </TopGroup>
      </TopBar>

      <Body>
        <Dock aria-label="Dock">
          <DockList>
            {dock.map((d) => (
              <DockItem key={d.name} $active={d.active} aria-label={d.name}>
                <Dots>{Array.from({ length: d.dots ?? 0 }, (_, i) => <i key={i} />)}</Dots>
                {d.icon}
                {d.badge && <Badge>{d.badge}</Badge>}
              </DockItem>
            ))}
          </DockList>
          <AppsButton aria-label="Show applications"><AppsGrid /></AppsButton>
        </Dock>

        <Browser>
          <TitleBar>
            <WindowTitle>phpLDAPadmin (1.2.5) - - Mozilla Firefox</WindowTitle>
            <WindowButtons>
              <button aria-label="Minimize"><WinButton kind="min" /></button>
              <button aria-label="Maximize"><WinButton kind="max" /></button>
              <button aria-label="Close"><WinButton kind="close" /></button>
            </WindowButtons>
          </TitleBar>

          <TabStrip role="tablist">
            {tabs.map((t) => (
              <TabBox key={t.title} role="tab" aria-selected={!!t.active} $active={t.active}>
                {t.icon}
                <TabTitle>{t.title}</TabTitle>
                <button aria-label="Close tab"><Cross /></button>
              </TabBox>
            ))}
            <NewTab aria-label="New tab">
              <Icon s={14} vb="0 0 14 14"><path d="M7 0v14M0 7h14" stroke="#dfdbd2" strokeWidth="1.800" /></Icon>
            </NewTab>
          </TabStrip>

          <NavBar>
            <NavButtons>
              <NavButton $round aria-label="Back"><BackIcon /></NavButton>
              <NavButton aria-label="Forward"><ForwardIcon /></NavButton>
              <NavButton aria-label="Reload"><ReloadIcon /></NavButton>
              <NavButton aria-label="Home"><HomeIcon /></NavButton>
            </NavButtons>
            <NavSpacer />
            <UrlBar>
              <Shield />
              <UrlDivider />
              <LockWarn />
              <UrlInput aria-label="Address" defaultValue="https://192.168.0.140:6443/cmd.php?server_id=1&redirect=true" />
              <UrlActions>
                <button aria-label="Page actions"><MoreDots /></button>
                <button aria-label="Save to Pocket"><Pocket /></button>
                <button aria-label="Bookmark this page"><Star /></button>
              </UrlActions>
            </UrlBar>
            <NavSpacer />
            <NavButtons $end>
              <NavButton aria-label="Library"><Library /></NavButton>
              <NavButton aria-label="Sidebars"><Sidebar /></NavButton>
              <NavButton aria-label="Account"><Account /></NavButton>
              <NavDivider />
              <NavButton aria-label="What's new"><Gift /></NavButton>
              <NavButton aria-label="Menu"><Burger /></NavButton>
            </NavButtons>
          </NavBar>
          <Bookmarks><a href="#start"><Firefox s={16} />Getting Started</a></Bookmarks>

          <Page>
            <PageHeader>
              <Logo />
              <HeaderIcons>
                <HelpBubble /><Bulb /><Bug /><Smile /><HelpRound />
              </HeaderIcons>
            </PageHeader>
            <PageNav><a href="#home">Home</a> | <a href="#purge">Purge caches</a></PageNav>

            <Columns>
              <Tree>
                <TreeHead>
                  <ServerName><Computer />ldap-host<Clock /></ServerName>
                  <button aria-label="Expand tree"><PlusBox blue /></button>
                </TreeHead>
                <ServerTools>
                  {tools.map((t) => <a key={t.label} href={`#${t.label}`}>{t.icon}{t.label}</a>)}
                </ServerTools>
                <Login>Logged in as: cn<Eq>=</Eq>admin</Login>
                <TreeNode>
                  <PlusBox />
                  <Globe />
                  <a href="#dc">dc<Eq>=</Eq>example<Comma>,</Comma>dc<Eq>=</Eq>org (1)</a>
                </TreeNode>
              </Tree>

              <Main>
                <EntryHead>
                  <h1>dc=example</h1>
                  <p>
                    <span>Server: </span><b>ldap-host</b><span>Distinguished Name: </span><b>dc=example,dc=org</b>
                    <br />
                    Template: <b>Default</b>
                  </p>
                </EntryHead>

                <Menus>
                  <Menu items={leftMenu} />
                  <Menu items={rightMenu} />
                  <Tooltip role="tooltip">Create a child entry</Tooltip>
                </Menus>

                <Form onSubmit={(e) => e.preventDefault()}>
                  <AttrHead>dc<Notes><Required />, <Abbr title="RDN">rdn</Abbr></Notes></AttrHead>
                  <Values>
                    <ValueRow>
                      <TextBox $plain readOnly aria-label="dc" defaultValue="example" />
                      <Side $end>*</Side>
                    </ValueRow>
                    <ValueLink $small>(<a href="#rename">rename</a>)</ValueLink>
                  </Values>

                  <AttrHead>o<Notes><Required /></Notes></AttrHead>
                  <Values>
                    <ValueRow><TextBox aria-label="o" defaultValue="Example Inc." /></ValueRow>
                    <ValueLink>(<a href="#add-o">add value</a>)</ValueLink>
                  </Values>

                  <AttrHead>objectClass<Notes><Required /></Notes></AttrHead>
                  <Values>
                    <ValueRow><Info s={14} dark /><TextBox aria-label="objectClass 1" defaultValue="top" /></ValueRow>
                    <ValueRow><Info s={14} dark /><TextBox aria-label="objectClass 2" defaultValue="dcObject" /></ValueRow>
                    <ValueRow>
                      <Info s={14} dark />
                      <TextBox $plain readOnly aria-label="objectClass 3" defaultValue="organization" />
                      <Side>(<Abbr title="Structural object class">structural</Abbr>)</Side>
                    </ValueRow>
                    <ValueLink>(<a href="#add-class">add value</a>)</ValueLink>
                  </Values>
                  <Submit type="submit">Update Object</Submit>
                </Form>
              </Main>
            </Columns>
            <BottomRule><i /><i /></BottomRule>
            <Version>1.2.5</Version>
          </Page>

          <RemotePanel aria-label="TeamViewer panel">
            <svg width="25" height="54" viewBox="0 0 25 54" aria-hidden="true">
              <path d="M25 .5H4C1 .5.500 2 .500 4v32c0 3 2 5 4 7l20.500 10z" fill="#fff" stroke="#d8d8e0" />
              <rect x="2" y="2" width="23" height="22" fill="#0b7fe0" />
              <circle cx="13" cy="13" r="9.500" fill="#fff" />
              <path d="M5 13l5-3.500-1 2.500h8l-1-2.500 5 3.500-5 3.500 1-2.500H9l1 2.500z" fill="#0b6fd6" />
            </svg>
          </RemotePanel>
          <StatusTip>
            https://192.168.0.140:6443/cmd.php?cmd=template_engine&amp;server_id=1&amp;container=dc=example,dc=org
          </StatusTip>
        </Browser>
      </Body>
    </Desktop>
  );
}
